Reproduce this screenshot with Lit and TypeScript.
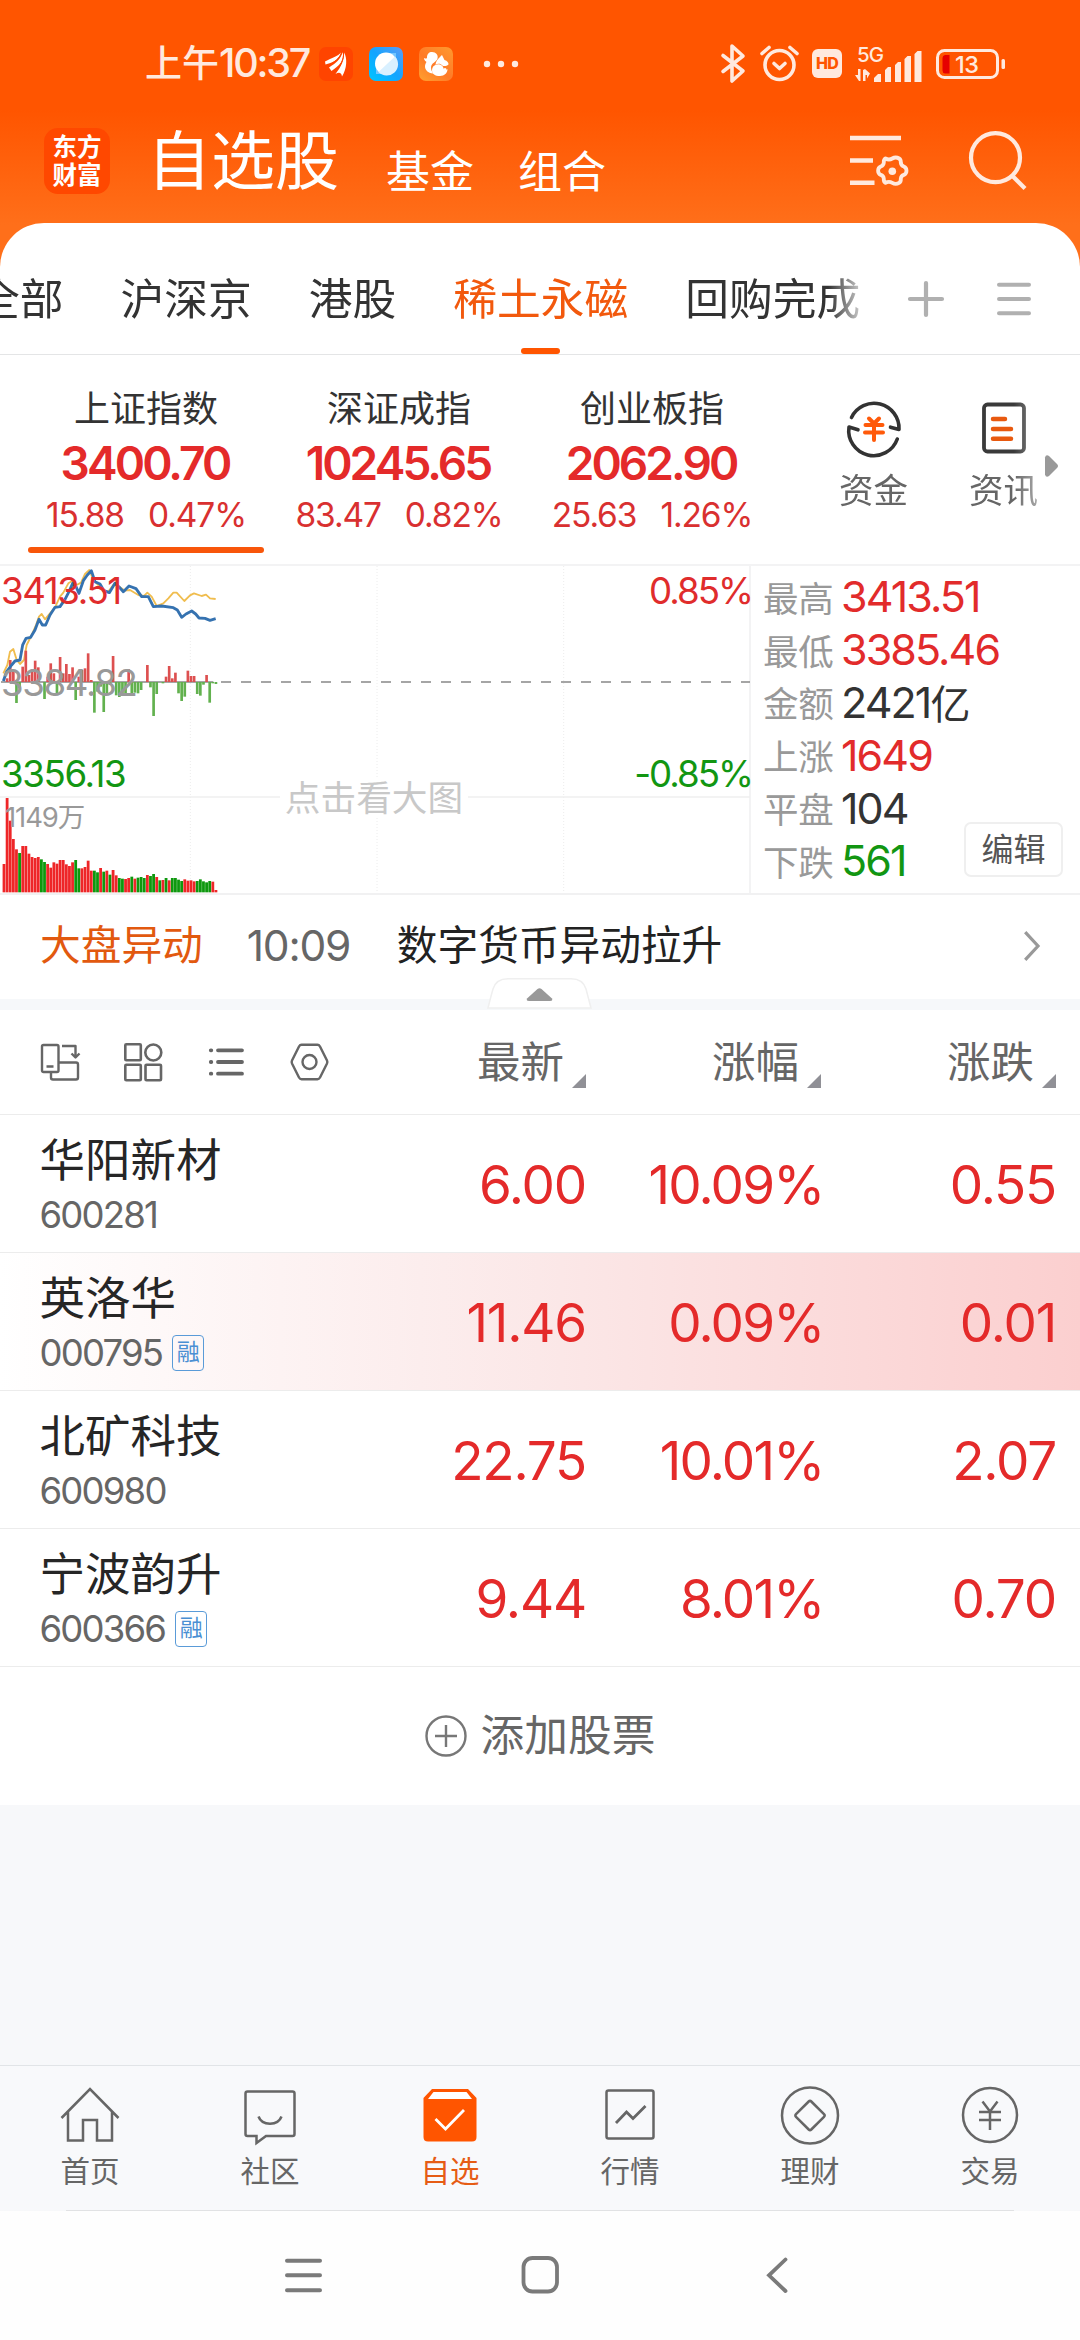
import { LitElement, html, svg, css, nothing } from "lit";
import { customElement, property } from "lit/decorators.js";
import { classMap } from "lit/directives/class-map.js";

const base = css`
  :host {
    display: block;
    font-family: Inter, "Noto Sans CJK SC", sans-serif;
    font-feature-settings: "kern" 1;
  }
  * {
    box-sizing: border-box;
  }
  svg {
    display: block;
    flex: none;
    overflow: visible;
  }
`;

/* ---------- status bar ---------- */

@customElement("status-bar")
class StatusBar extends LitElement {
  static styles = [
    base,
    css`
      .bar {
        height: 110px;
        padding: 17px 75px 0 145px;
        display: flex;
        align-items: center;
        color: #ffe9de;
      }
      .time {
        font-size: 37px;
        line-height: 40px;
        width: 174px;
        white-space: nowrap;
        font-weight: 500;
      }
      .clock {
        font-size: 39.5px;
        letter-spacing: -2.2px;
      }
      .apps {
        display: flex;
        gap: 16px;
      }
      .dots {
        margin-left: 30px;
      }
      .right {
        margin-left: auto;
        display: flex;
        align-items: center;
      }
      .bt {
        margin-right: 15px;
      }
      .alarm {
        margin-right: 13px;
      }
      .hd {
        width: 30px;
        height: 29px;
        border-radius: 6px;
        background: #ffe9de;
        color: #ff5500;
        font-size: 16px;
        line-height: 29px;
        font-weight: 800;
        text-align: center;
        letter-spacing: -0.8px;
        margin-right: 13px;
      }
      .battery {
        margin-left: 14px;
      }
      .small {
        font: 500 20.5px Inter, sans-serif;
        letter-spacing: -1px;
      }
      .pct {
        font: 500 23.5px Inter, sans-serif;
        letter-spacing: -0.6px;
      }
    `,
  ];
  render() {
    return html`<div class="bar">
      <div class="time">上午<span class="clock">10:37</span></div>
      <div class="apps">
        <svg width="34" height="34" viewBox="0 0 34 34">
          <rect width="34" height="34" rx="7" fill="#ff4400" />
          <g fill="#fff">
            <path d="M6 14.500C13 11 19 9 22 5.500C20 13 13 16 6.500 17.500Z" />
            <path d="M10 20.500C17 16 22 12 23.500 5C26 13 20 19 12.500 24Z" />
            <path d="M16.500 27C22 20 25.500 13 25 5.500C28.500 11 28 22 23 29.500C22.500 25.500 20 25 16.500 27Z" />
          </g>
          <path d="M7 19.500C15 16 21 11 23 5M15 26C21 20 25 13 24.600 5" fill="none" stroke="#ff4400" stroke-width="1" />
        </svg>
        <svg width="34" height="34" viewBox="0 0 34 34">
          <defs>
            <linearGradient id="b" x1="0" y1="1" x2="1" y2="0">
              <stop offset="0" stop-color="#00c6ff" />
              <stop offset=".5" stop-color="#12a4ff" />
              <stop offset="1" stop-color="#5c9cf5" />
            </linearGradient>
          </defs>
          <rect width="34" height="34" rx="7" fill="url(#b)" />
          <path d="M17 6h10v11a11 11 0 0 1-10 10H7V17A11 11 0 0 1 17 6Z" fill="#74c6ff" />
          <circle cx="17" cy="16.500" r="11" fill="#fff" />
          <path d="M26 9.500A11 11 0 0 1 9.500 25Z" fill="#d9f0ff" />
        </svg>
        <svg width="34" height="34" viewBox="0 0 34 34">
          <defs>
            <linearGradient id="o" x1="1" y1="0" x2="0.200" y2="1">
              <stop offset="0" stop-color="#ff9a2e" />
              <stop offset=".6" stop-color="#ff7a28" />
              <stop offset="1" stop-color="#ff9a2e" />
            </linearGradient>
          </defs>
          <rect width="34" height="34" rx="7" fill="url(#o)" />
          <path
            d="M13 5c4 0 6.500 3 5.500 6.500C17.500 15 12 16 12 20.500c0 2.500 1 4 2 6C9 26 6 23 6 19.500c0-2 .8-3.500 1.500-4.500C5.500 13.500 5 12.500 5 11c2 1 3 .5 3-.5C8 7 10 5 13 5Z"
            fill="#fff"
          />
          <path d="M23 8l2.500 5c3 1 4 2.500 4 4.500-2 2-4 1.500-5.500 1.500-3-3-5.500-2.500-7.500-1C17 13 20 11 23 8Z" fill="#fff" />
          <path d="M13 23a6 6 0 0 1 11.500-2c.5 3 2 3 4 1 0 4-3 7-7.500 7C16 29 13 27 13 23Z" fill="#fff" />
          <circle cx="26" cy="22.500" r="1.500" fill="#fff" />
        </svg>
      </div>
      <svg class="dots" width="36" height="8" fill="#ffe9de">
        <circle cx="4" cy="4" r="3.200" />
        <circle cx="18" cy="4" r="3.200" />
        <circle cx="32" cy="4" r="3.200" />
      </svg>
      <div class="right">
        <svg class="bt" width="24" height="39" fill="none" stroke="#ffe9de" stroke-width="3.600" stroke-linejoin="round" stroke-linecap="round">
          <path d="M2 11.500L22 27L11 37V2L22 12L2 27.500" />
        </svg>
        <svg class="alarm" width="39" height="37" fill="none" stroke="#ffe9de" stroke-width="3.600" stroke-linecap="round">
          <circle cx="19.500" cy="20" r="14.500" />
          <path d="M2 8.500L9 2.500M37 8.500L30 2.500" />
          <path d="M14 18.500L19.500 23.500L25 18.500" stroke-linejoin="round" />
        </svg>
        <div class="hd">HD</div>
        <svg width="67" height="36" fill="#ffe9de">
          <text class="small" x="2" y="15.500">5G</text>
          <path d="M0 29h3v-6h2.500v12H4ZM8 24v11h2.500v-6h1.500v3.500l3-5L10 23Z" />
          <path d="M19 32l4-4h3v8h-7ZM30 24l3-3h3v15h-6ZM40 19l3-3h3v20h-6ZM49.500 13l3-3h3.500v26h-6.500ZM59.500 8l3-3h4v31h-7Z" />
        </svg>
        <svg class="battery" width="69" height="30">
          <rect x="1.500" y="1.500" width="60" height="27" rx="7" fill="none" stroke="#ffe9de" stroke-width="3" />
          <rect x="65.500" y="10" width="3.500" height="10" rx="1.500" fill="#ffe9de" />
          <path d="M9 6h4.500v18.500H9a3 3 0 0 1-2.500-3V9A3 3 0 0 1 9 6Z" fill="#e60000" />
          <text class="pct" x="19" y="23.500" fill="#ffe9de">13</text>
        </svg>
      </div>
    </div>`;
  }
}

/* ---------- header ---------- */

@customElement("app-header")
class AppHeader extends LitElement {
  static styles = [
    base,
    css`
      .head {
        height: 113px;
        padding: 0 49px 0 44px;
        display: flex;
        color: #fff;
      }
      .logo {
        width: 66px;
        height: 66px;
        margin-top: 18px;
        border-radius: 14px;
        background: #ff4800;
        font-size: 24.5px;
        line-height: 28px;
        font-weight: 700;
        padding: 5px 0 0 8.5px;
      }
      .title {
        margin-left: 37px;
        font-size: 64px;
        line-height: 70px;
        margin-top: 16px;
      }
      .sub {
        font-size: 44px;
        line-height: 50px;
        margin: 37px 0 0 44px;
      }
      .title + .sub {
        margin-left: 47px;
      }
      .icons {
        margin-left: auto;
        display: flex;
        gap: 61px;
        padding-top: 20px;
      }
    `,
  ];
  render() {
    return html`<div class="head">
      <div class="logo">东方<br />财富</div>
      <div class="title">自选股</div>
      <div class="sub">基金</div>
      <div class="sub">组合</div>
      <div class="icons">
        <svg width="60" height="60" fill="none" stroke="#ffe9de" stroke-width="4.500">
          <path d="M0 8h51M0 30.400h23M0 52.800h24.500" />
          <path
            d="M35.500 29.500q3.400 2 6.800 0q3.400-2 6.800 0q2 1.200 1.700 4.300q.3 2.800 3 3.700q2.700 1.200 2.700 4.200t-2.700 4.200q-2.700.9-3 3.700q.3 3.100-1.700 4.300q-3.400 2-6.800 0q-3.400-2-6.800 0q-2-1.200-1.700-4.300q-.3-2.800-3-3.700q-2.700-1.200-2.700-4.200t2.700-4.200q2.700-.9 3-3.700q-.3-3.100 1.700-4.300Z"
            stroke-width="3.800"
            stroke-linejoin="round"
            transform="translate(0 -1)"
          />
          <circle cx="42.300" cy="41.200" r="3.800" fill="#ffe9de" stroke="none" />
        </svg>
        <svg width="60" height="60" fill="none" stroke="#ffe9de" stroke-width="4.200">
          <circle cx="24.500" cy="27.700" r="24.500" />
          <path d="M40.500 45L54 58.500" />
        </svg>
      </div>
    </div>`;
  }
}

@customElement("group-tabs")
class GroupTabs extends LitElement {
  static styles = [
    base,
    css`
      .wrap {
        height: 132px;
        display: flex;
        border-bottom: 1px solid #e4e5e6;
      }
      .tabs {
        width: 863px;
        overflow: hidden;
        display: flex;
        gap: 57px;
        mask-image: linear-gradient(90deg, #000 828px, transparent 872px);
      }
      .tab {
        flex: none;
        font-size: 43.75px;
        line-height: 50px;
        padding-top: 52px;
        color: #333;
        display: flex;
        flex-direction: column;
        align-items: center;
        justify-content: space-between;
      }
      .tab:first-child {
        margin-left: -24px;
      }
      .on {
        color: #f2590d;
      }
      .on::after {
        content: "";
        width: 39px;
        height: 6px;
        border-radius: 3px;
        background: #ff5500;
      }
      .tools {
        display: flex;
        align-items: center;
        padding: 20px 0 0 45px;
        gap: 53px;
      }
    `,
  ];
  render() {
    const tabs = ["全部", "沪深京", "港股", "稀土永磁", "回购完成"];
    return html`<div class="wrap">
      <div class="tabs">
        ${tabs.map((t, i) => html`<div class=${classMap({ tab: true, on: i === 3 })}><span>${t}</span></div>`)}
      </div>
      <div class="tools">
        <svg width="36" height="36" stroke="#b0b0b0" stroke-width="4.200" stroke-linecap="round">
          <path d="M2 18h32M18 2v32" />
        </svg>
        <svg width="34" height="34" stroke="#b0b0b0" stroke-width="4" stroke-linecap="round">
          <path d="M2 2.700h30M2 17h30M2 31.300h30" />
        </svg>
      </div>
    </div>`;
  }
}

/* ---------- indexes ---------- */

const INDEXES = [
  ["上证指数", "3400.70", "15.88", "0.47%"],
  ["深证成指", "10245.65", "83.47", "0.82%"],
  ["创业板指", "2062.90", "25.63", "1.26%"],
];

@customElement("index-strip")
class IndexStrip extends LitElement {
  static styles = [
    base,
    css`
      .strip {
        height: 209px;
        padding-left: 19.5px;
        display: flex;
      }
      .cell {
        flex: none;
        width: 253px;
        padding: 34px 8.5px 0;
        text-align: center;
        color: #e42a2a;
        display: flex;
        flex-direction: column;
      }
      .name {
        color: #333;
        font-size: 36px;
        line-height: 40px;
      }
      .val {
        font-size: 46px;
        line-height: 50px;
        font-weight: 600;
        letter-spacing: -2.9px;
        padding-right: 2px;
        margin-top: 9px;
      }
      .chg {
        display: flex;
        justify-content: center;
        gap: 24px;
        font-size: 33.5px;
        line-height: 40px;
        letter-spacing: -1.1px;
        color: #d93030;
        margin-top: 7px;
      }
      .sel::after {
        content: "";
        height: 6px;
        border-radius: 3px;
        background: #f8560a;
        margin-top: 12px;
      }
      .links {
        flex: 1;
        display: flex;
        padding: 44px 0 0 30px;
        mask-image: linear-gradient(90deg, #000 235px, rgba(0, 0, 0, 0.5) 262px);
      }
      .link {
        width: 130px;
        display: flex;
        flex-direction: column;
        align-items: center;
        flex: none;
        gap: 14px;
        font-size: 34.5px;
        line-height: 40px;
        color: #666;
      }
      .more {
        margin: 99px 22px 0 -35px;
      }
    `,
  ];
  render() {
    return html`<div class="strip">
      ${INDEXES.map(
        ([n, v, a, b], i) => html`<div class=${classMap({ cell: true, sel: i === 0 })}>
          <div class="name">${n}</div>
          <div class="val">${v}</div>
          <div class="chg"><span>${a}</span><span>${b}</span></div>
        </div>`
      )}
      <div class="links">
        <div class="link">
          <svg width="58" height="58" viewBox="-29 -29 58 58" fill="none" stroke="#333" stroke-width="3.600" stroke-linecap="round" stroke-linejoin="round">
            <path d="M-22.500 -10.500A25 25 0 0 1 25 1.500L16.500 -.8" />
            <path d="M23.300 11A25 25 0 0 1 -25 -1L-16 1.800" />
            <path d="M-5 -9.500L0 -4.500L5 -9.500M-8.500 -3H8.500M-9 4.500H9M0 -4V12" stroke="#ff5a0a" stroke-width="4" />
          </svg>
          <span>资金</span>
        </div>
        <div class="link">
          <svg width="58" height="58" viewBox="0 0 58 58" fill="none" stroke="#3a3a3a" stroke-width="3.800" stroke-linecap="round">
            <rect x="9" y="5.500" width="40" height="47" rx="3.500" />
            <path d="M18 20h12M18 30h18M18 39.800h18" stroke="#e8590f" stroke-width="4.500" />
          </svg>
          <span>资讯</span>
        </div>
      </div>
      <svg class="more" width="13" height="24">
        <path d="M0 3.500Q1 0 4 2L12 10Q14 12 12 14L4 22Q1 24 0 20.500Z" fill="#999" />
      </svg>
    </div>`;
  }
}

/* ---------- minute chart ---------- */

const PITCH = 9.35;
const FLOOR = 1027;
const ZERO = 396;

const VOLUME: [number, string][] = [
  [942, "r"], [744, "r"], [812, "r"], [867, "r"], [898, "r"], [909, "g"], [888, "r"], [888, "r"], [911, "r"], [921, "r"],
  [924, "r"], [921, "r"], [928, "g"], [936, "g"], [942, "r"], [953, "r"], [937, "r"], [941, "r"], [930, "r"], [930, "r"],
  [943, "r"], [948, "r"], [937, "r"], [930, "g"], [955, "g"], [955, "r"], [951, "r"], [932, "r"], [962, "r"], [962, "g"],
  [967, "g"], [954, "r"], [965, "g"], [962, "r"], [974, "g"], [960, "r"], [976, "r"], [984, "g"], [986, "g"], [987, "r"],
  [984, "r"], [980, "g"], [986, "r"], [983, "g"], [981, "g"], [984, "g"], [975, "r"], [978, "g"], [972, "g"], [981, "r"],
  [991, "g"], [990, "r"], [984, "g"], [991, "r"], [984, "g"], [984, "g"], [989, "g"], [993, "g"], [988, "r"], [992, "r"],
  [991, "r"], [994, "r"], [993, "g"], [988, "g"], [994, "g"], [997, "g"], [993, "g"], [995, "r"], [1020, "r"],
];

const MOMENTUM = [
  396, 385, 330, 360, 459, 415, 350, 302, 375, 358, 332, 352, 396, 447, 380, 340, 370, 430, 321, 370, 342, 372, 352, 450,
  380, 360, 355, 310, 390, 488, 425, 410, 486, 430, 405, 318, 436, 441, 436, 430, 358, 430, 428, 430, 420, 396, 345, 412,
  498, 432, 396, 400, 380, 348, 385, 368, 430, 453, 440, 362, 378, 378, 432, 437, 404, 375, 458, 400, 402,
];

const PRICE =
  "10,393 20,365 35,345 45,333 60,330 68,285 78,265 92,262 105,240 117,208 127,225 137,225 150,195 165,172 180,170 195,148 207,125 218,100 228,110 237,130 250,92 262,75 274,62 285,95 300,102 312,122 328,128 345,100 358,112 370,125 387,108 408,116 425,140 445,140 460,170 485,168 520,173 532,180 545,202 558,192 575,183 587,192 597,204 615,205 630,211 647,206";
const AVERAGE =
  "10,370 22,345 30,305 40,297 50,330 60,342 72,330 80,285 95,255 108,225 117,200 125,192 135,208 150,190 165,172 180,140 190,128 205,100 218,92 230,105 243,98 255,72 268,60 280,90 295,105 310,120 325,125 345,98 360,112 375,122 390,120 415,135 432,138 442,128 455,140 470,168 490,160 505,145 520,128 530,128 553,153 570,136 582,130 605,138 618,134 630,145 647,147";

@customElement("minute-chart")
class MinuteChart extends LitElement {
  static styles = [
    base,
    css`
      .panel {
        display: flex;
        height: 331px;
        border-top: 2px solid #f3f3f4;
        border-bottom: 2px solid #f1f1f2;
      }
      .chart {
        position: relative;
        width: 751px;
        border-right: 2px solid #f3f3f4;
        font-size: 36.7px;
        line-height: 40px;
        letter-spacing: -1.4px;
      }
      .lb {
        position: absolute;
        left: 1px;
      }
      .rt {
        left: auto;
        right: -3px;
        letter-spacing: -2px;
      }
      .hi {
        top: 5px;
        color: #e02c2c;
      }
      .mid {
        top: 97px;
        color: #999;
      }
      .lo {
        top: 188px;
        color: #129612;
      }
      .vol {
        top: 231px;
        left: 5px;
        font-size: 27.5px;
        line-height: 40px;
        color: #999;
        letter-spacing: -1.1px;
      }
      .hint {
        top: 212px;
        left: 280px;
        width: 188px;
        background: #fff;
        text-align: center;
        font-size: 35.7px;
        letter-spacing: 0;
        color: #c8c8c8;
      }
      .stats {
        flex: 1;
        padding: 4px 0 0 12px;
      }
      .row {
        height: 52.8px;
        display: flex;
        align-items: center;
        font-size: 43px;
        letter-spacing: -1.9px;
        color: #333;
      }
      .k {
        width: 78px;
        font-size: 35.5px;
        letter-spacing: -0.3px;
        color: #999;
      }
      .unit {
        font-size: 40px;
      }
      .up {
        color: #e22b2b;
      }
      .down {
        color: #129612;
      }
      .side {
        flex: 1;
        position: relative;
        display: flex;
      }
      .edit {
        position: absolute;
        right: 17px;
        top: 256px;
        width: 99px;
        height: 55px;
        border: 2px solid #efefef;
        border-radius: 7px;
        background: #fff;
        font-size: 32px;
        line-height: 51px;
        text-align: center;
        color: #555;
      }
    `,
  ];
  render() {
    const x = (i: number) => 12 + PITCH * i;
    return html`<div class="panel">
      <div class="chart">
        <svg width="750" height="327" viewBox="0 48 2250 981">
          <g stroke="#ececec" stroke-width="3" stroke-dasharray="3 6">
            <path d="M571 48V1029M1131 48V1029M1691 48V1029" />
          </g>
          <path d="M0 741H2250" stroke="#efefef" stroke-width="5" />
          <path d="M3 396H640" stroke="#888" stroke-width="4" />
          <path d="M663 396H2250" stroke="#888" stroke-width="5" stroke-dasharray="30 30" />
          ${VOLUME.map(([t, c], i) => svg`<rect x=${x(i) - 4.2} y=${t} width="8.400" height=${FLOOR - t} fill=${c === "r" ? "#ee2628" : "#0d980d"} />`)}
          <polyline points=${AVERAGE} fill="none" stroke="#f0bd4e" stroke-width="5.500" stroke-linejoin="round" />
          ${MOMENTUM.map((t, i) =>
            t === ZERO
              ? nothing
              : svg`<rect x=${x(i) - 4} y=${Math.min(t, ZERO)} width="8" height=${Math.abs(t - ZERO)} fill=${t < ZERO ? "#dd5050" : "#62b14e"} />`
          )}
          <polyline points=${PRICE} fill="none" stroke="#3572b0" stroke-width="8.500" stroke-linejoin="round" />
        </svg>
        <div class="lb hi">3413.51</div>
        <div class="lb mid">3384.82</div>
        <div class="lb lo">3356.13</div>
        <div class="lb vol">1149万</div>
        <div class="lb rt hi">0.85%</div>
        <div class="lb rt lo">-0.85%</div>
        <div class="lb hint">点击看大图</div>
      </div>
      <div class="side">
        <div class="stats">
          <div class="row up"><span class="k">最高</span>3413.51</div>
          <div class="row up"><span class="k">最低</span>3385.46</div>
          <div class="row"><span class="k">金额</span>2421<span class="unit">亿</span></div>
          <div class="row up"><span class="k">上涨</span>1649</div>
          <div class="row"><span class="k">平盘</span>104</div>
          <div class="row down"><span class="k">下跌</span>561</div>
        </div>
        <div class="edit">编辑</div>
      </div>
    </div>`;
  }
}

@customElement("market-news")
class MarketNews extends LitElement {
  static styles = [
    base,
    css`
      .news {
        height: 104px;
        padding: 0 40px 3px 40px;
        display: flex;
        align-items: center;
        font-size: 40.7px;
        line-height: 50px;
      }
      .tag {
        color: #e2590f;
      }
      .time {
        color: #666;
        font-size: 42.5px;
        letter-spacing: -1.2px;
        margin-left: 44px;
        width: 150px;
      }
      .txt {
        color: #222;
      }
      .go {
        margin-left: auto;
      }
      .band {
        height: 11px;
        background: #f6f8fa;
        position: relative;
      }
      .handle {
        position: absolute;
        left: 488px;
        top: -21px;
      }
    `,
  ];
  render() {
    return html`<div class="news">
        <span class="tag">大盘异动</span><span class="time">10:09</span><span class="txt">数字货币异动拉升</span>
        <svg class="go" width="16" height="30" fill="none" stroke="#999" stroke-width="3.200"><path d="M1.200 1.200L14 15L1.200 28.800" /></svg>
      </div>
      <div class="band">
        <svg class="handle" width="103" height="30">
          <path d="M0 30Q3 18 5 11Q8 .7 20 .7H83Q95 .7 98 11L103 30Z" fill="#fff" stroke="#efefef" stroke-width="1.500" />
          <path d="M39 20.500L49.500 11Q51.500 9.500 53.500 11L64 20.500Q65 23 62 23H41Q38 23 39 20.500Z" fill="#999" />
        </svg>
      </div>`;
  }
}

/* ---------- stock list ---------- */

@customElement("list-head")
class ListHead extends LitElement {
  static styles = [
    base,
    css`
      .head {
        height: 105px;
        padding: 0 24px 0 40px;
        display: flex;
        align-items: center;
        border-bottom: 1px solid #ececec;
      }
      .icons {
        flex: 1;
        display: flex;
        gap: 43px;
      }
      .col {
        width: 235px;
        display: flex;
        justify-content: flex-end;
        align-items: center;
        gap: 8px;
        font-size: 43.5px;
        line-height: 50px;
        color: #666;
      }
      .tri {
        margin-top: 38px;
      }
    `,
  ];
  render() {
    return html`<div class="head">
      <div class="icons">
        <svg width="40" height="40" fill="none" stroke="#666" stroke-width="2.400" stroke-linejoin="round">
          <rect x="2" y="3" width="16.500" height="27" rx="1.500" />
          <path d="M6.500 24.500h7M22 4h13.500v10M31.500 11.500l4 4l4-4" />
          <path d="M18.500 20.500h17.500q2 0 2 2v13q0 2-2 2h-23q-2 0-2-2v-5.500" />
        </svg>
        <svg width="40" height="40" fill="none" stroke="#666" stroke-width="2.600">
          <rect x="2.300" y="2.300" width="15.500" height="16" rx="1" />
          <circle cx="30.300" cy="10.500" r="8" />
          <rect x="2.300" y="22.800" width="15.500" height="15.500" rx="1" />
          <rect x="22.500" y="22.800" width="15.500" height="15.500" rx="1" />
        </svg>
        <svg width="40" height="40" fill="none" stroke="#666" stroke-width="3.800" stroke-linecap="round">
          <path d="M12 8.300h24M12 20h24M12 31.700h24M4.800 8.300h.5M4.800 20h.5M4.800 31.700h.5" />
        </svg>
        <svg width="40" height="40" fill="none" stroke="#666" stroke-width="2.400" stroke-linejoin="round">
          <path d="M12.500 2.800h16Q30 2.800 31 4.500L38 18.500Q38.700 20 38 21.500L31 35.500Q30 37.200 28.500 37.200h-16Q11 37.200 10 35.500L3 21.500Q2.300 20 3 18.500L10 4.500Q11 2.800 12.500 2.800Z" />
          <circle cx="20.500" cy="20" r="7" />
        </svg>
      </div>
      ${["最新", "涨幅", "涨跌"].map(
        (t) => html`<div class="col">
          <span>${t}</span><svg class="tri" width="14" height="14"><path d="M14 0V14H0Z" fill="#909096" /></svg>
        </div>`
      )}
    </div>`;
  }
}

@customElement("stock-row")
class StockRow extends LitElement {
  @property() name = "";
  @property() code = "";
  @property({ type: Boolean }) margin = false;
  @property({ type: Boolean }) flash = false;
  @property({ attribute: false }) values: string[] = [];
  static styles = [
    base,
    css`
      .row {
        height: 138px;
        padding: 0 24px 0 39.5px;
        display: flex;
        align-items: center;
        border-bottom: 1px solid #ececec;
      }
      .flash {
        background: linear-gradient(90deg, #fff, #fbe7e7 52%, #fbcfcf);
      }
      .id {
        flex: 1;
        white-space: nowrap;
      }
      .name {
        font-size: 45.5px;
        line-height: 50px;
        color: #262626;
        margin-top: 4px;
      }
      .code {
        display: flex;
        align-items: center;
        gap: 8px;
        margin-top: 8px;
        height: 42px;
        font-size: 36.5px;
        letter-spacing: -1.8px;
        color: #666;
      }
      .badge {
        width: 32px;
        height: 36px;
        border: 1.5px solid #5a9bd8;
        border-radius: 4px;
        color: #4a8fd3;
        font-size: 23px;
        line-height: 33px;
        letter-spacing: 0;
        text-align: center;
        margin-left: 2px;
      }
      .v {
        width: 235px;
        text-align: right;
        font-size: 53px;
        line-height: 60px;
        letter-spacing: -1.2px;
        color: #e42a2a;
        padding-top: 2px;
      }
      .pct {
        letter-spacing: -1.8px;
        margin: 0 -2.5px 0 2.5px;
      }
    `,
  ];
  render() {
    return html`<div class=${classMap({ row: true, flash: this.flash })}>
      <div class="id">
        <div class="name">${this.name}</div>
        <div class="code"><span>${this.code}</span>${this.margin ? html`<span class="badge">融</span>` : nothing}</div>
      </div>
      ${this.values.map((v) => html`<div class=${classMap({ v: true, pct: v.endsWith("%") })}>${v}</div>`)}
    </div>`;
  }
}

/* ---------- bottom ---------- */

const TABS = [
  {
    label: "首页",
    icon: svg`<path d="M1.500 31L30 2L58.500 31M8 25V53.500H23V33H37V53.500H52V25" />`,
  },
  {
    label: "社区",
    icon: svg`<path d="M7.500 4.500H52.500Q54.500 4.500 54.500 6.500V47Q54.500 49 52.500 49H26L16.500 56V49H7.500Q5.500 49 5.500 47V6.500Q5.500 4.500 7.500 4.500ZM18.500 29.500C22 39 38 39 41.500 29.500" />`,
  },
  {
    label: "自选",
    icon: svg`<path d="M12 2H48L56.500 11V50Q56.500 54.500 52 54.500H8Q3.500 54.500 3.500 50V11Z" fill="#ff5500" stroke="none"/><path d="M13.500 5H46.500L52 12H8Z" fill="#fff" stroke="none"/><path d="M15.500 32L25.500 42L44 23" stroke="#fff" stroke-width="2.800"/>`,
  },
  {
    label: "行情",
    icon: svg`<rect x="6.500" y="3.500" width="47" height="48" rx="2" /><path d="M16 36L26.500 25L33 31.500L45.500 19" stroke-width="2.800"/>`,
  },
  {
    label: "理财",
    icon: svg`<circle cx="30" cy="28.500" r="28" /><path d="M28.700 14.500Q30 13.200 31.300 14.500L44 27.200Q45.300 28.500 44 29.800L31.300 42.500Q30 43.800 28.700 42.500L16 29.800Q14.700 28.500 16 27.200Z" />`,
  },
  {
    label: "交易",
    icon: svg`<circle cx="30" cy="28" r="27" /><path d="M22.500 14.500L30 24.500L37.500 14.500M19 25H41M19 33H41M30 24.500V43" />`,
  },
];

@customElement("bottom-tabs")
class BottomTabs extends LitElement {
  static styles = [
    base,
    css`
      .bar {
        height: 145px;
        border-top: 1px solid #e1e4e7;
        background: #f8f9fb;
        display: grid;
        grid-template-columns: repeat(6, 1fr);
      }
      .item {
        display: flex;
        flex-direction: column;
        align-items: center;
        padding-top: 21px;
        gap: 9px;
        font-size: 29.5px;
        line-height: 36px;
        color: #666;
      }
      .on {
        color: #e65c14;
      }
      .line {
        height: 1px;
        margin: 0 66px;
        background: #e1e2e4;
      }
      .nav {
        height: 129px;
        background: #fefefe;
        display: flex;
        justify-content: center;
        gap: 200px;
      }
    `,
  ];
  render() {
    return html`<div class="bar">
        ${TABS.map(
          (t, i) => html`<div class=${classMap({ item: true, on: i === 2 })}>
            <svg width="60" height="57" viewBox="0 0 60 57" fill="none" stroke="#666" stroke-width="2.500">${t.icon}</svg>
            <span>${t.label}</span>
          </div>`
        )}
      </div>
      <div class="line"></div>
      <div class="nav">
        <svg width="37" height="129" stroke="#7a7a7a" stroke-width="4" stroke-linecap="round">
          <path d="M2 49.700h33M2 64.300h33M2 79.300h33" />
        </svg>
        <svg width="37" height="129" fill="none" stroke="#7a7a7a" stroke-width="3.800">
          <rect x="1.500" y="47" width="33.500" height="33.500" rx="9" />
        </svg>
        <svg width="37" height="129" fill="none" stroke="#7a7a7a" stroke-width="3.800" stroke-linecap="round">
          <path d="M26.500 48.500L10 64.300L26.500 80" />
        </svg>
      </div>`;
  }
}

const STOCKS = [
  { name: "华阳新材", code: "600281", values: ["6.00", "10.09%", "0.55"] },
  { name: "英洛华", code: "000795", margin: true, flash: true, values: ["11.46", "0.09%", "0.01"] },
  { name: "北矿科技", code: "600980", values: ["22.75", "10.01%", "2.07"] },
  { name: "宁波韵升", code: "600366", margin: true, values: ["9.44", "8.01%", "0.70"] },
];

@customElement("app-root")
class AppRoot extends LitElement {
  static styles = [
    base,
    css`
      .page {
        width: 1080px;
        height: 2340px;
        overflow: hidden;
        display: flex;
        flex-direction: column;
        background: #f7f8fa;
      }
      .top {
        background: linear-gradient(#ff5500 110px, #ff6f1a 225px);
        height: 270px;
      }
      .sheet {
        margin-top: -47px;
        border-radius: 44px 44px 0 0;
        background: #fff;
        overflow: hidden;
      }
      .add {
        height: 138px;
        display: flex;
        align-items: center;
        justify-content: center;
        gap: 14px;
        color: #666;
        font-size: 43.7px;
        line-height: 50px;
      }
      .bottom {
        margin-top: auto;
      }
    `,
  ];
  render() {
    return html`<div class="page">
      <div class="top">
        <status-bar></status-bar>
        <app-header></app-header>
      </div>
      <div class="sheet">
        <group-tabs></group-tabs>
        <index-strip></index-strip>
        <minute-chart></minute-chart>
        <market-news></market-news>
        <list-head></list-head>
        ${STOCKS.map(
          (s) => html`<stock-row .name=${s.name} .code=${s.code} .margin=${!!s.margin} .flash=${!!s.flash} .values=${s.values}></stock-row>`
        )}
        <div class="add">
          <svg width="42" height="42" fill="none" stroke="#777" stroke-width="2.400">
            <circle cx="21" cy="21" r="19.500" />
            <path d="M10 21h22M21 10v22" />
          </svg>
          <span>添加股票</span>
        </div>
      </div>
      <bottom-tabs class="bottom"></bottom-tabs>
    </div>`;
  }
}
